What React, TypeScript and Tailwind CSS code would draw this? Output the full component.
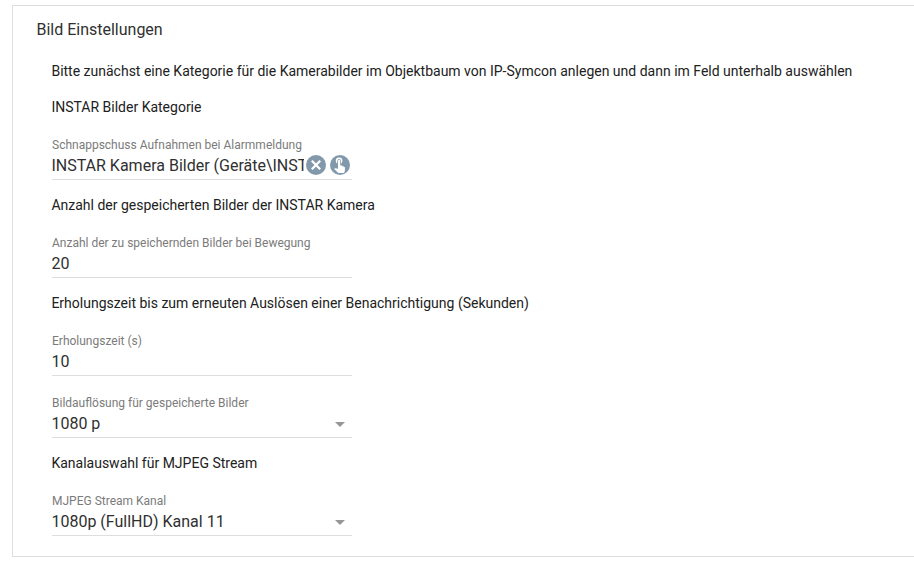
import React from 'react';

function Note({ children }: { children: React.ReactNode }) {
  return <p className="-ml-[0.6px] h-9 whitespace-nowrap text-[14px] leading-[20px] text-[#212121]">{children}</p>;
}

function Field({ label, value, kind = 'text' }: { label: string; value: string; kind?: 'text' | 'select' | 'category' }) {
  return (
    <div className="h-[44px] w-[300px] border-b border-[#dedede]">
      <div className="h-[18px] whitespace-nowrap pt-px text-[12px] leading-[16px] text-[#7b7b7b]">{label}</div>
      <div className="flex h-6 items-center">
        <div className="-ml-[0.6px] min-w-0 flex-1 overflow-hidden whitespace-nowrap text-[16px] leading-6 text-[#303030]">{value}</div>
        {kind === 'select' && (
          <svg className="mr-[7px] h-[5px] w-[10px] fill-[#969696]" viewBox="0 0 10 5"><path d="M0 0h10L5 5z" /></svg>
        )}
        {kind === 'category' && (
          <div className="mb-0.5 flex">
            <svg className="size-6" viewBox="0 0 24 24">
              <circle cx="12" cy="12" r="10" fill="#8298ab" />
              <path d="m7.8 7.8 8.4 8.4m0-8.4-8.4 8.4" stroke="#fff" strokeWidth="2.3" />
            </svg>
            <svg className="size-6" viewBox="0 0 24 24">
              <circle cx="12" cy="12" r="10" fill="#8298ab" />
              <g transform="translate(2.7 2.4) scale(.73)" fill="#fff">
                <path d="M9 11.24V7.5a2.5 2.5 0 0 1 5 0v3.74c1.21-.81 2-2.18 2-3.74a4.5 4.5 0 0 0-9 0c0 1.56.79 2.93 2 3.74zm9.84 4.63-4.54-2.26c-.17-.07-.35-.11-.54-.11H13v-6a1.5 1.5 0 0 0-3 0v10.74l-3.43-.72c-.08-.01-.15-.03-.24-.03-.31 0-.59.13-.79.33l-.79.8 4.94 4.94c.27.27.65.44 1.06.44h6.79c.75 0 1.33-.55 1.44-1.28l.75-5.27c.01-.07.02-.14.02-.2 0-.62-.38-1.16-.91-1.38z" />
              </g>
            </svg>
          </div>
        )}
      </div>
    </div>
  );
}

export default function App() {
  return (
    <main className="h-[564px] w-[914px] overflow-hidden bg-white pl-3 pt-[5px] font-['Roboto',sans-serif]">
      <section className="h-[552px] w-[920px] border border-[#dedede] pl-6 pt-3">
        <h1 className="-ml-[0.6px] h-[43px] text-[16px] leading-6 text-[#303030]">Bild Einstellungen</h1>
        <div className="pl-[15px]">
          <Note>Bitte zunächst eine Kategorie für die Kamerabilder im Objektbaum von IP-Symcon anlegen und dann im Feld unterhalb auswählen</Note>
          <Note>INSTAR Bilder Kategorie</Note>
          <div className="mb-[15px] pt-[3px]"><Field label="Schnappschuss Aufnahmen bei Alarmmeldung" value="INSTAR Kamera Bilder (Geräte\INST" kind="category" /></div>
          <Note>Anzahl der gespeicherten Bilder der INSTAR Kamera</Note>
          <div className="mb-[15px] pt-[3px]"><Field label="Anzahl der zu speichernden Bilder bei Bewegung" value="20" /></div>
          <Note>Erholungszeit bis zum erneuten Auslösen einer Benachrichtigung (Sekunden)</Note>
          <div className="mb-[18px] pt-[3px]"><Field label="Erholungszeit (s)" value="10" /></div>
          <div className="mb-[15px]"><Field label="Bildauflösung für gespeicherte Bilder" value="1080 p" kind="select" /></div>
          <Note>Kanalauswahl für MJPEG Stream</Note>
          <div className="pt-[3px]"><Field label="MJPEG Stream Kanal" value="1080p (FullHD) Kanal 11" kind="select" /></div>
        </div>
      </section>
    </main>
  );
}
